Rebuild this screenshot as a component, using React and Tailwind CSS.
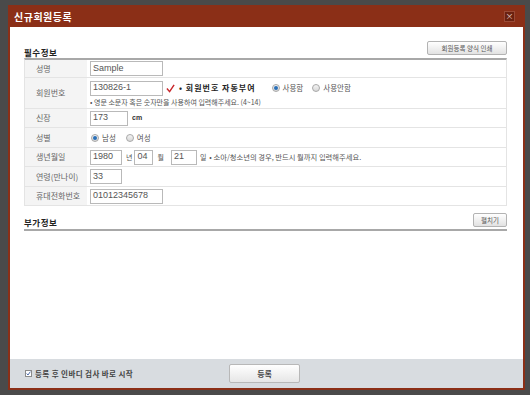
import React from "react";

const ko = { fontFamily: '"Noto Sans CJK KR", "Noto Sans", sans-serif' };
const lat = { fontFamily: '"Liberation Sans", Arial, sans-serif' };

const Radio = ({ on }) => (
  <span className="w-[8px] h-[8px] rounded-full border border-[#a8a8a8] bg-gradient-to-b from-[#f4f4f4] to-[#d8d8d8] flex items-center justify-center">
    {on && <span className="w-[4px] h-[4px] rounded-full bg-[#2a6fb8]" />}
  </span>
);

const Input = ({ value, w }) => (
  <div
    className={`${w} h-[15px] border border-[#b9b9b9] bg-white flex items-center pl-[2px] text-[9px] text-[#555]`}
    style={lat}
  >
    {value}
  </div>
);

const Row = ({ label, h, children, last }) => (
  <div className={`flex ${last ? "" : "border-b border-[#e4e4e4]"}`}>
    <div className={`w-[62px] ${h} shrink-0 bg-[#f4f4f4] pl-[11px] flex items-center text-[8px] text-[#666]`}>
      {label}
    </div>
    <div className="flex-1 pl-[3px] flex flex-col justify-center">{children}</div>
  </div>
);

export default function App() {
  return (
    <div className="w-[530px] h-[395px] bg-[#4a4a4a] overflow-hidden pt-[5px] pl-[8px]" style={ko}>
      <div className="w-[517px] h-[385px] flex flex-col">
        <div className="h-[22px] bg-[#8b2f17] flex items-center justify-between pl-[6px] pr-[10px]">
          <span className="text-white font-bold text-[10px] tracking-[0.5px]">신규회원등록</span>
          <span className="w-[11px] h-[11px] bg-[#6a2110] border border-[#9a4a36] flex items-center justify-center text-[#e8d0c8] text-[8px] leading-none">
            ×
          </span>
        </div>
        <div className="flex-1 flex flex-col border-x-2 border-b-2 border-[#8b2f17]">
          <div className="flex-1 bg-white pl-[14px] pr-[16px] pt-[14px]">
            <div className="flex items-end justify-between h-[17px]">
              <span className="text-[8.5px] font-bold text-[#222] tracking-[0.5px] leading-none pb-[2px]">필수정보</span>
              <button className="w-[80px] h-[14px] mb-[3px] border border-[#b3b3b3] rounded-[2px] bg-gradient-to-b from-white to-[#e2e2e2] text-[6.5px] text-[#555] leading-none">
                회원등록 양식 인쇄
              </button>
            </div>
            <div className="border-t-2 border-t-[#a8a8a8] border-x border-x-[#e4e4e4] border-b border-b-[#e4e4e4]">
              <Row label="성명" h="h-[17px]">
                <Input value="Sample" w="w-[73px]" />
              </Row>
              <Row label="회원번호" h="h-[30px]">
                <div className="flex items-center">
                  <Input value="130826-1" w="w-[73px]" />
                  <svg width="9" height="9" viewBox="0 0 10 10" className="ml-[3px]">
                    <path d="M1 5 L4 8.5 L9 1" stroke="#c8262a" strokeWidth="1.6" fill="none" />
                  </svg>
                  <span className="ml-[4px] text-[8px] tracking-[1px] font-bold text-[#222]">• 회원번호 자동부여</span>
                  <span className="ml-[16px] flex items-center gap-[3px] text-[7.5px] text-[#555]">
                    <Radio on /> 사용함
                  </span>
                  <span className="ml-[9px] flex items-center gap-[3px] text-[7.5px] text-[#555]">
                    <Radio /> 사용안함
                  </span>
                </div>
                <span className="mt-[3px] text-[7px] text-[#555] leading-none">
                  • 영문 소문자 혹은 숫자만을 사용하여 입력해주세요. (4~14)
                </span>
              </Row>
              <Row label="신장" h="h-[18px]">
                <div className="flex items-center">
                  <Input value="173" w="w-[38px]" />
                  <span className="ml-[4px] text-[7px] font-bold text-[#333]" style={lat}>cm</span>
                </div>
              </Row>
              <Row label="성별" h="h-[19px]">
                <div className="flex items-center text-[7.5px] text-[#555] pl-[1px]">
                  <span className="flex items-center gap-[3px]"><Radio on /> 남성</span>
                  <span className="ml-[10px] flex items-center gap-[3px]"><Radio /> 여성</span>
                </div>
              </Row>
              <Row label="생년월일" h="h-[18px]">
                <div className="flex items-center text-[7px] text-[#555]">
                  <Input value="1980" w="w-[32px]" />
                  <span className="ml-[4px] mr-[2px]">년</span>
                  <Input value="04" w="w-[19px]" />
                  <span className="ml-[4px] mr-[7px]">월</span>
                  <Input value="21" w="w-[26px]" />
                  <span className="ml-[3px]">일</span>
                  <span className="ml-[3px] text-[7.3px]">• 소아/청소년의 경우, 반드시 월까지 입력해주세요.</span>
                </div>
              </Row>
              <Row label="연령(만나이)" h="h-[19px]">
                <Input value="33" w="w-[32px]" />
              </Row>
              <Row label="휴대전화번호" h="h-[18px]" last>
                <Input value="01012345678" w="w-[73px]" />
              </Row>
            </div>
            <div className="mt-[7px] flex items-end justify-between border-b-2 border-[#a8a8a8] pb-[2px]">
              <span className="text-[8.5px] font-bold text-[#222] tracking-[0.5px] leading-none pb-[1px]">부가정보</span>
              <button className="w-[34px] h-[14px] border border-[#b3b3b3] rounded-[2px] bg-gradient-to-b from-white to-[#e2e2e2] text-[6.5px] text-[#555] leading-none">
                펼치기
              </button>
            </div>
          </div>
          <div className="h-[29px] bg-[#d8dce0] flex items-center pl-[15px]">
            <div className="w-[135px] flex items-center gap-[3px]">
              <span className="w-[7px] h-[7px] border border-[#8a8a8a] bg-white flex items-center justify-center">
                <svg width="5" height="5" viewBox="0 0 6 6">
                  <path d="M0.8 3 L2.4 4.8 L5.2 0.8" stroke="#2a4f9a" strokeWidth="1" fill="none" />
                </svg>
              </span>
              <span className="text-[7.5px] tracking-[0.4px] font-bold text-[#444]">등록 후 인바디 검사 바로 시작</span>
            </div>
            <button className="ml-[69px] w-[71px] h-[19px] border border-[#b8b8b8] rounded-[2px] bg-gradient-to-b from-white to-[#e6e6e6] text-[8px] font-bold text-[#444]">
              등록
            </button>
          </div>
        </div>
      </div>
    </div>
  );
}
